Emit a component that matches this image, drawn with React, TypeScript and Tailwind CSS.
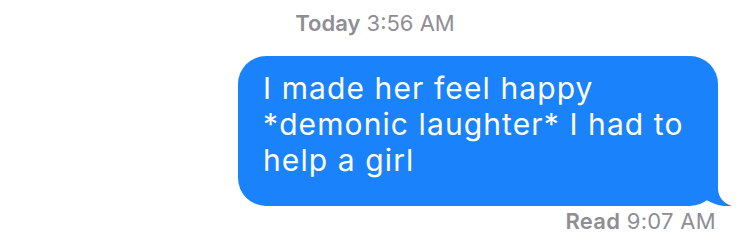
function Tail() {
  return (
    <svg
      className="absolute -right-[14px] bottom-0"
      width="32"
      height="40"
      viewBox="0 0 32 40"
    >
      <path d="M18 0 L18 22 C18 31 23 37 32 40 C22 41 12 38 5 33 Z" fill="#1a82fb" />
    </svg>
  );
}

export default function App() {
  return (
    <div className="h-[244px] w-[750px] overflow-hidden bg-white font-['Inter',sans-serif]">
      <div className="pt-3 text-center text-[22px] leading-none text-[#8e8e93]">
        <span className="font-semibold">Today</span> 3:56 AM
      </div>
      <div className="mt-[22px] flex justify-end pr-[32px]">
        <div className="relative w-[480px] rounded-[28px] bg-[#1a82fb] pb-[28px] pl-[25px] pr-[20px] pt-[14px] text-[30px] leading-[36px] tracking-[1.1px] text-white">
          I made her feel happy *demonic laughter* I had to help a girl
          <Tail />
        </div>
      </div>
      <div className="mt-1 pr-[34px] text-right text-[22px] leading-none tracking-[0.3px] text-[#8e8e93]">
        <span className="font-semibold">Read</span> 9:07 AM
      </div>
    </div>
  );
}
